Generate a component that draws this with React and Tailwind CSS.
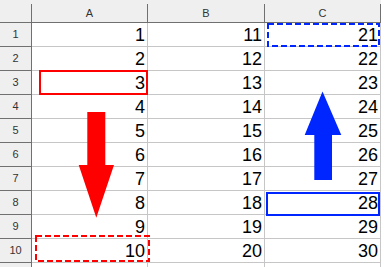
import React from "react";

const cols = ["A", "B", "C"];
const widths = ["w-[116px]", "w-[117px]", "w-[116px]"];
const rows = Array.from({ length: 10 }, (_, i) => i + 1);

function Cell({ w, value }) {
  return (
    <div
      className={`${w} h-[24px] shrink-0 border-r border-b border-[#c6c6c6] pr-[2px] pt-[1px] text-right text-[18px] leading-[23px] text-black`}
    >
      {value}
    </div>
  );
}

export default function App() {
  return (
    <div
      className="relative w-[386px] h-[267px] overflow-hidden bg-white"
      style={{ fontFamily: '"Liberation Sans", Arial, sans-serif' }}
    >
      {/* header row */}
      <div className="flex">
        <div className="w-[32px] h-[23px] shrink-0 bg-[#efefef] border-b border-[#707070] pt-[4px]">
          <div className="h-full border-r border-[#707070]" />
        </div>
        {cols.map((c, i) => (
          <div
            key={c}
            className={`${widths[i]} h-[23px] shrink-0 bg-[#efefef] border-b border-[#707070] pt-[4px]`}
          >
            <div className="h-full border-r border-[#707070] flex items-center justify-center text-[11px] text-[#333]">
              {c}
            </div>
          </div>
        ))}
      </div>
      {rows.map((r) => (
        <div key={r} className="flex">
          <div className="w-[32px] h-[24px] shrink-0 bg-[#efefef] border-r border-b border-[#707070] flex items-center justify-center text-[11px] text-[#333]">
            {r}
          </div>
          <Cell w={widths[0]} value={r} />
          <Cell w={widths[1]} value={r + 10} />
          <Cell w={widths[2]} value={r + 20} />
        </div>
      ))}
      <div className="flex">
        <div className="w-[32px] h-[24px] shrink-0 bg-[#efefef] border-r border-[#707070]" />
        {widths.map((w, i) => (
          <div key={i} className={`${w} h-[24px] shrink-0 border-r border-[#c6c6c6]`} />
        ))}
      </div>

      {/* annotations */}
      <svg
        className="absolute left-0 top-0 pointer-events-none"
        width="386"
        height="267"
        viewBox="0 0 386 267"
      >
        <rect x="40" y="71" width="107" height="23" fill="none" stroke="#ff0000" strokeWidth="2" />
        <rect x="36" y="236" width="113" height="25" fill="none" stroke="#ff0000" strokeWidth="2" strokeDasharray="6 3" />
        <rect x="268" y="24" width="111" height="22" fill="none" stroke="#0026ff" strokeWidth="2" strokeDasharray="6 3" />
        <rect x="267" y="193" width="112" height="22" fill="none" stroke="#0026ff" strokeWidth="2" />
        <polygon
          points="87.3,112 105.3,112 105.3,165 114,165 96.3,217.7 78.7,165 87.3,165"
          fill="#ff0000"
        />
        <polygon
          points="322.5,91.5 341.3,135 332,135 332,180 314.3,180 314.3,135 304.7,135"
          fill="#0026ff"
        />
      </svg>
    </div>
  );
}
